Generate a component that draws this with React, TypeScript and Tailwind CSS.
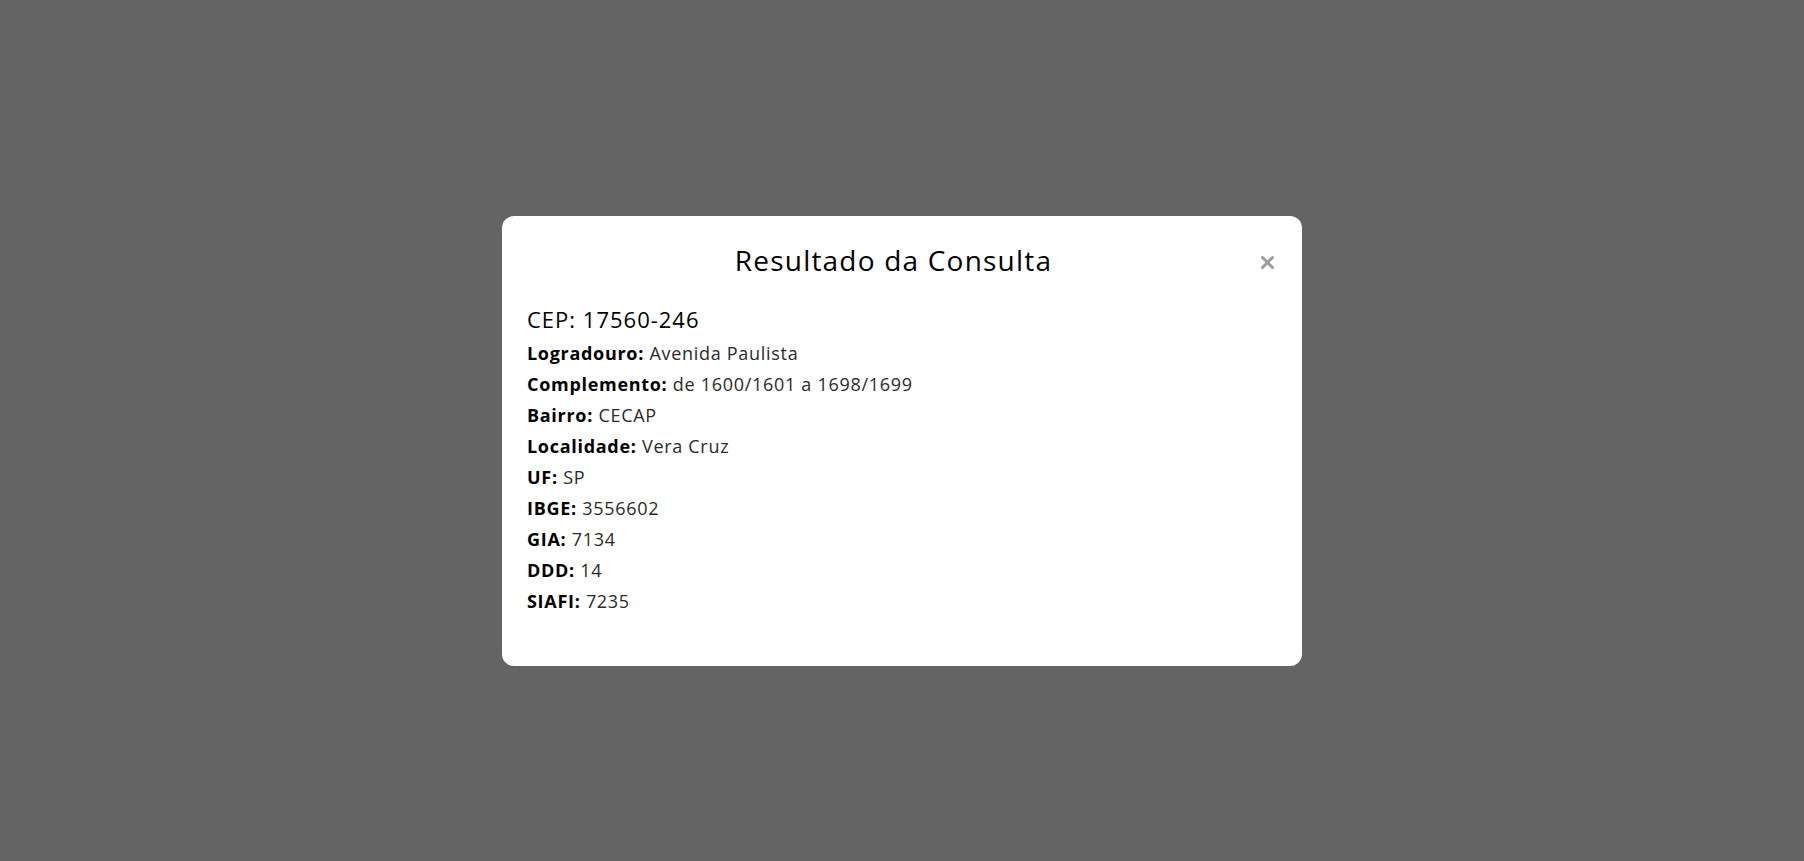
import React from "react";

const rows: [string, string][] = [
  ["Logradouro", "Avenida Paulista"],
  ["Complemento", "de 1600/1601 a 1698/1699"],
  ["Bairro", "CECAP"],
  ["Localidade", "Vera Cruz"],
  ["UF", "SP"],
  ["IBGE", "3556602"],
  ["GIA", "7134"],
  ["DDD", "14"],
  ["SIAFI", "7235"],
];

export default function App() {
  return (
    <div
      className="w-full h-[861px] bg-[#646464] flex items-start justify-center pt-[216px]"
      style={{ fontFamily: "'Open Sans', Lato, sans-serif" }}
    >
      <div className="w-[800px] h-[450px] bg-white rounded-[12px] pl-[25px] pr-[27px] pt-[28px]">
        <div className="flex items-center">
          <h2 className="flex-1 text-center text-[28px] leading-[32px] tracking-[1.2px] text-black">
            Resultado da Consulta
          </h2>
          <svg width="15" height="15" viewBox="0 0 15 15" className="mt-[5px]">
            <path d="M2.5 2.5 L12.5 12.5 M12.5 2.5 L2.5 12.5" stroke="#9a9a9a" strokeWidth="3" strokeLinecap="round" />
          </svg>
        </div>
        <div className="mt-[28px] text-[22px] leading-[30px] font-medium tracking-[1px] text-black">CEP: 17560-246</div>
        <div className="mt-[4px]">
          {rows.map(([k, v]) => (
            <div key={k} className="text-[18px] leading-[31px] tracking-[0.7px] text-[#2a2a2a]">
              <span className="font-bold text-black">{k}:</span> <span>{v}</span>
            </div>
          ))}
        </div>
      </div>
    </div>
  );
}
